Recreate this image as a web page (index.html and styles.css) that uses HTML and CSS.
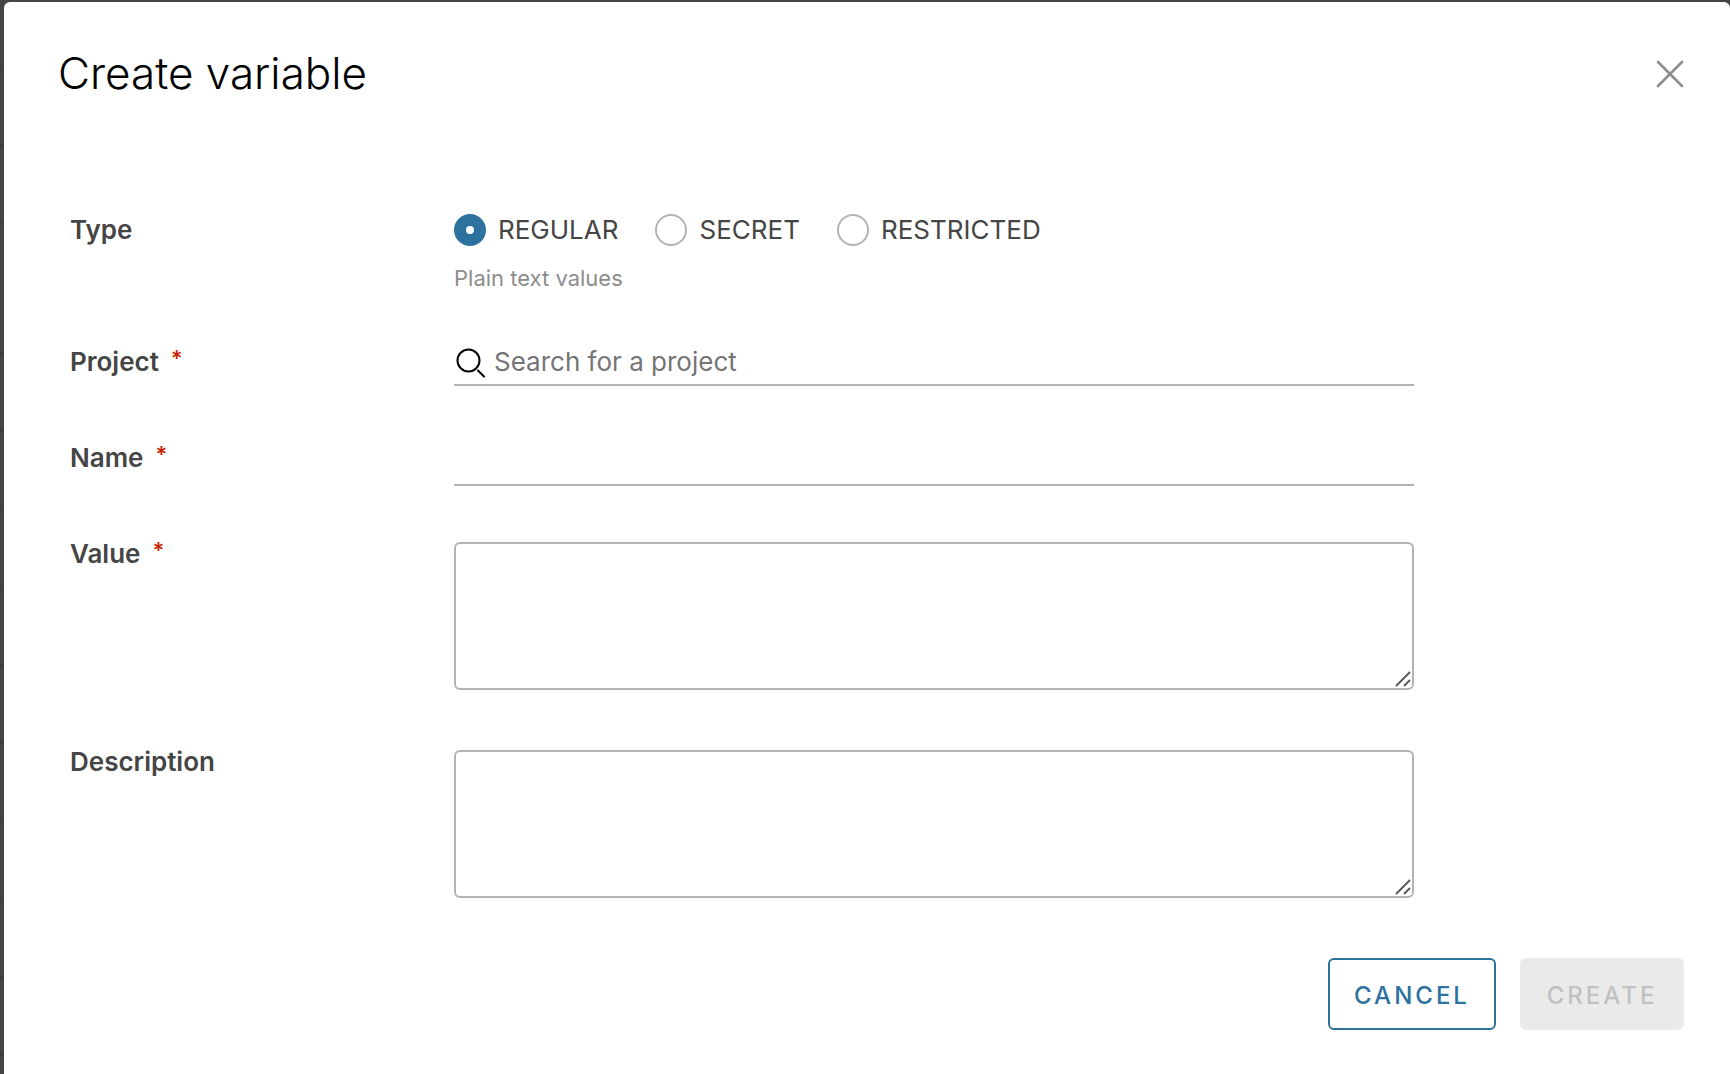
FILE: index.html
```html
<!DOCTYPE html>
<html lang="en">
<head>
<meta charset="utf-8">
<meta name="viewport" content="width=device-width, initial-scale=1">
<title>Create variable</title>
<link rel="stylesheet" href="styles.css">
</head>
<body>
<main class="modal" role="dialog" aria-labelledby="modal-title">
  <header class="modal-header">
    <h1 class="modal-title" id="modal-title">Create variable</h1>
    <button class="close" type="button" aria-label="Close">
      <svg width="28" height="28" viewBox="0 0 28 28" fill="none" stroke="#8c8c8c" stroke-width="2.6" stroke-linecap="round"><path d="M2 2 26 26M26 2 2 26"/></svg>
    </button>
  </header>
  <form class="form">
    <div class="row row-type">
      <span class="label" id="type-label">Type</span>
      <div class="control">
        <div class="radios" role="radiogroup" aria-labelledby="type-label">
          <label class="radio"><input type="radio" name="type" checked>REGULAR</label>
          <label class="radio"><input type="radio" name="type">SECRET</label>
          <label class="radio"><input type="radio" name="type">RESTRICTED</label>
        </div>
        <p class="hint">Plain text values</p>
      </div>
    </div>
    <div class="row row-project">
      <label class="label" for="project">Project<span class="required">*</span></label>
      <div class="control line-field">
        <svg class="search-icon" width="32" height="32" viewBox="0 0 32 32" fill="none" stroke="#000" stroke-width="2" stroke-linecap="round"><circle cx="14.5" cy="14.5" r="11"/><path d="M24 24.500 30 30.500"/></svg>
        <input class="line-input" id="project" type="text" placeholder="Search for a project">
      </div>
    </div>
    <div class="row row-name">
      <label class="label" for="name">Name<span class="required">*</span></label>
      <div class="control line-field">
        <input class="line-input" id="name" type="text">
      </div>
    </div>
    <div class="row row-area">
      <label class="label" for="value">Value<span class="required">*</span></label>
      <div class="control area">
        <textarea class="textarea" id="value"></textarea>
        <svg class="grip" width="16" height="16" viewBox="0 0 16 16" fill="none" stroke="#555" stroke-width="1.800"><path d="M1 15 15 1M9 15 15 9"/></svg>
      </div>
    </div>
    <div class="row row-area">
      <label class="label" for="description">Description</label>
      <div class="control area">
        <textarea class="textarea" id="description"></textarea>
        <svg class="grip" width="16" height="16" viewBox="0 0 16 16" fill="none" stroke="#555" stroke-width="1.800"><path d="M1 15 15 1M9 15 15 9"/></svg>
      </div>
    </div>
    <footer class="actions">
      <button class="button button-outline" type="button">CANCEL</button>
      <button class="button button-primary" type="submit" disabled>CREATE</button>
    </footer>
  </form>
</main>
</body>
</html>
```
FILE: styles.css
```css
* {
  box-sizing: border-box;
}

body {
  margin: 0;
  min-height: 100vh;
  padding: 2px 0 0 4px;
  display: flex;
  font-family: Metropolis, Inter, sans-serif;
  font-size: 26px;
  line-height: 32px;
  color: #454545;
  /* dimmed page behind the dialog: header rows above, list rows below */
  background:
    linear-gradient(#464442 0 66px, #3e3c3a 66px 68px, #464442 68px 144px, #3e3c3a 144px 146px, #464442 146px 222px, #403e3c 222px 224px, #464442 224px 300px) 0 0 / 100% 300px no-repeat,
    repeating-linear-gradient(#464442 0 40px, #3e3c3a 40px 42px, #464442 42px 78px);
}

input,
textarea,
button {
  font: inherit;
  color: inherit;
}

.modal {
  flex: 1;
  min-width: 0;
  padding: 44px 46px 42px 54px;
  background: #fff;
  border-radius: 6px 6px 0 0;
}

.modal-header {
  display: flex;
  justify-content: space-between;
  align-items: flex-start;
}

.modal-title {
  margin: 0;
  font-size: 44px;
  font-weight: 300;
  line-height: 54px;
  color: #000;
}

.close {
  display: flex;
  padding: 14px 0;
  border: 0;
  background: none;
}

.form {
  padding: 112px 0 0 12px;
}

.row {
  display: grid;
  grid-template-columns: 384px minmax(0, 960px);
}

.row-type {
  min-height: 132px;
}

.row-project {
  min-height: 96px;
}

.row-name {
  min-height: 96px;
}

.row-area {
  margin-bottom: 56px;
}

.label {
  font-weight: 600;
}

.required {
  margin-left: 12px;
  color: #c92100;
  font-size: 22px;
  line-height: 1;
  vertical-align: 5px;
}

.radios {
  display: flex;
  gap: 37px;
}

.radio {
  display: flex;
  align-items: center;
  gap: 12px;
}

.radio input {
  appearance: none;
  width: 32px;
  height: 32px;
  margin: 0;
  border: 2px solid #b3b3b3;
  border-radius: 50%;
  background: #fff;
}

.radio input:checked {
  border: 12px solid #2d719f;
}

.hint {
  margin: 18px 0 0;
  font-size: 22px;
  line-height: 28px;
  color: #8c8c8c;
}

.line-field {
  display: flex;
  align-items: flex-start;
  align-self: start;
  gap: 8px;
  border-bottom: 2px solid #b3b3b3;
}

.search-icon {
  flex: none;
}

.line-input {
  flex: 1;
  min-width: 0;
  height: 38px;
  padding: 0 0 8px;
  border: 0;
  outline: 0;
  background: none;
}

.row-name .line-input {
  height: 42px;
}

.line-input::placeholder {
  color: #757575;
  opacity: 1;
}

.area {
  position: relative;
  padding-top: 4px;
}

.textarea {
  display: block;
  width: 100%;
  height: 148px;
  padding: 8px 12px;
  border: 2px solid #b3b3b3;
  border-radius: 6px;
  background: #fff;
  resize: none;
}

.grip {
  position: absolute;
  right: 3px;
  bottom: 3px;
}

.actions {
  display: flex;
  justify-content: flex-end;
  gap: 24px;
  padding-top: 4px;
}

.button {
  height: 72px;
  padding: 4px 24px 0;
  border: 2px solid #2d719f;
  border-radius: 6px;
  font-size: 24px;
  font-weight: 500;
  letter-spacing: 3px;
}

.button-outline {
  min-width: 168px;
  color: #2d719f;
  background: #fff;
}

.button-primary {
  min-width: 164px;
}

.button-primary:disabled {
  border-color: #eaeaea;
  color: #c1c1c1;
  background: #eaeaea;
}
```
